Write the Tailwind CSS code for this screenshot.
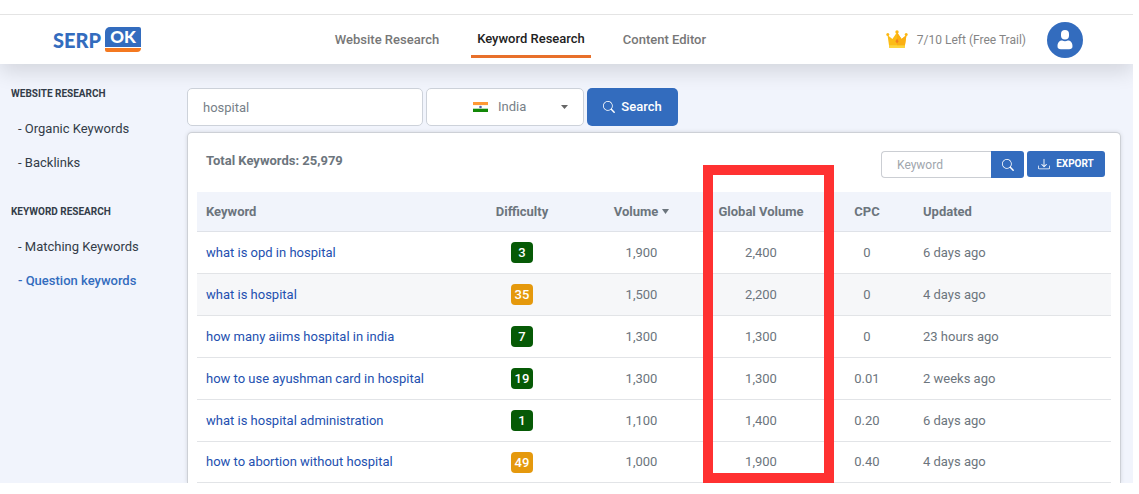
<!DOCTYPE html>
<html lang="en">
<head>
<meta charset="utf-8">
<meta name="viewport" content="width=device-width, initial-scale=1">
<title>SERP OK - Question keywords</title>
<script src="https://cdn.jsdelivr.net/npm/@tailwindcss/browser@4"></script>
</head>
<body class="flex min-h-screen flex-col bg-white pt-[14px] pr-[6px] pb-[11px] font-[Roboto,sans-serif] text-sm text-[#6c757d]">
  <div class="flex flex-1 flex-col overflow-hidden">
  <header class="relative z-10 flex h-[50px] items-center justify-between border-t border-[#e4e4e4] bg-white pr-[50px] pl-[53px] shadow-[0_8px_20px_rgba(0,0,0,0.12)]">
    <a href="#" class="flex items-center gap-1 font-[Lato,sans-serif] text-[20px] leading-6 font-black text-[#336cbe]">
      <span>SERP</span>
      <span class="flex flex-col gap-px">
        <span class="flex h-5 w-9 items-center justify-center rounded-tl-[5px] rounded-tr-[2px] bg-[#336cbe] text-[17px] leading-5 text-white">OK</span>
        <span class="h-1 w-9 rounded-br-[4px] rounded-bl-[2px] bg-[#f47920]"></span>
      </span>
    </a>
    <nav class="flex items-center gap-[26px] pl-[14px] text-[13px] leading-5 font-medium text-[#777]">
      <a href="#" class="px-1.5">Website Research</a>
      <a href="#" class="mt-2 border-b-[3px] border-[#e8702a] px-1.5 pb-1.5 text-[#222]" aria-current="page">Keyword Research</a>
      <a href="#" class="px-1.5">Content Editor</a>
    </nav>
    <div class="flex items-center gap-[21px]">
      <span class="flex items-center gap-[9px] text-xs text-[#858585]">
        <svg class="h-[19px] w-[22px]" viewBox="0 0 22 19" aria-hidden="true">
          <path d="M1.5 5 6.4 9 11 2.2 15.6 9 20.5 5 18.6 18H3.4Z" fill="#fcbc16"/>
          <path d="M3.1 15.2h15.8L18.5 18H3.5Z" fill="#fdd43c"/>
          <path d="M11 2.2 15.6 9 20.5 5 18.9 15.2H11Z" fill="#fbaf12"/>
          <circle cx="1.8" cy="4.4" r="1.5" fill="#fdb813"/><circle cx="11" cy="1.9" r="1.7" fill="#fdb813"/><circle cx="20.2" cy="4.4" r="1.5" fill="#fdb813"/>
          <path d="m11 8.8 1.6 2.4-1.6 2.4-1.6-2.4Z" fill="#f2801d"/>
        </svg>
        7/10 Left (Free Trail)
      </span>
      <button type="button" aria-label="Account" class="size-9">
        <svg class="size-9" viewBox="0 0 36 36" aria-hidden="true">
          <circle cx="18" cy="18" r="18" fill="#336cbe"/>
          <rect x="14" y="8" width="8" height="9.4" rx="4" fill="#fff"/>
          <path d="M10.5 24.2c0-3.6 2-5.6 4.8-5.6 1.6.8 3.8.8 5.4 0 2.8 0 4.8 2 4.8 5.6 0 2.2-1.4 3-3.4 3h-8.2c-2 0-3.4-.8-3.4-3Z" fill="#fff"/>
        </svg>
      </button>
    </div>
  </header>

  <div class="flex flex-1 bg-[#f1f4fc] pr-3">
    <aside class="w-[187px] shrink-0 pt-[22px] pl-[11px] text-[#333c48]">
      <h2 class="text-[10px] leading-4 font-bold text-[#333c48]">WEBSITE RESEARCH</h2>
      <ul class="mt-[10px] pl-[7px] text-[13px]">
        <li><a href="#" class="block leading-[34px]">- Organic Keywords</a></li>
        <li><a href="#" class="block leading-[34px]">- Backlinks</a></li>
      </ul>
      <h2 class="mt-6 text-[10px] leading-4 font-bold text-[#333c48]">KEYWORD RESEARCH</h2>
      <ul class="mt-[10px] pl-[7px] text-[13px]">
        <li><a href="#" class="block leading-[34px]">- Matching Keywords</a></li>
        <li><a href="#" class="block leading-[34px] font-medium text-[#336cbe]" aria-current="page">- Question keywords</a></li>
      </ul>
    </aside>

    <main class="flex min-w-0 flex-1 flex-col pt-6">
      <form class="flex gap-[3px]">
        <input type="text" aria-label="Search term" value="hospital" class="h-[38px] w-[236px] rounded-[5px] border border-[#cdd2da] bg-white px-[15px] text-[13px] text-[#777f88]">
        <span class="relative flex h-[38px] w-[158px] items-center rounded-[5px] border border-[#cdd2da] bg-white">
          <svg class="pointer-events-none absolute left-[46px] h-[10px] w-[15px]" viewBox="0 0 15 10" aria-hidden="true">
            <path d="M0 0h15v3.3H0Z" fill="#f93"/><path d="M0 3.3h15v3.4H0Z" fill="#fff"/><path d="M0 6.7h15V10H0Z" fill="#138808"/><circle cx="7.5" cy="5" r="1.3" fill="#5560a8"/>
          </svg>
          <select aria-label="Country" class="h-full w-full appearance-none bg-transparent pl-[71px] text-[13px] text-[#777f88]"><option>India</option></select>
          <svg class="pointer-events-none absolute right-[15px] h-1 w-[7px]" viewBox="0 0 7 4" aria-hidden="true"><path d="M0 0h7L3.5 4Z" fill="#666"/></svg>
        </span>
        <button type="submit" class="flex h-[38px] w-[91px] items-center justify-center gap-1.5 rounded-[5px] bg-[#336cbe] text-[13px] font-medium text-white">
          <svg class="size-3" viewBox="0 0 16 16" fill="currentColor" aria-hidden="true"><path d="M11.742 10.344a6.5 6.5 0 1 0-1.397 1.398l3.85 3.85a1 1 0 0 0 1.415-1.414l-3.868-3.834zM12 6.5a5.5 5.5 0 1 1-11 0 5.5 5.5 0 0 1 11 0z"/></svg>
          Search
        </button>
      </form>

      <section class="relative mt-1.5 flex-1 rounded-t-[5px] border border-b-0 border-[#cdd0d6] bg-white px-[9px] pt-[18px] shadow-[0_0_4px_rgba(0,0,0,0.12)]">
        <div class="flex items-start justify-between pr-[6px] pl-[9px]">
          <h1 class="text-[13px] leading-5 font-bold text-[#6c757d]">Total Keywords: 25,979</h1>
          <div class="flex gap-[3px]">
            <form class="flex">
              <input type="search" aria-label="Filter keywords" placeholder="Keyword" class="h-[27px] w-[110px] rounded-l-[4px] border border-r-0 border-[#cbced3] px-[15px] text-xs placeholder:text-[#a0a6ad]">
              <button type="submit" aria-label="Filter" class="flex h-[27px] w-[33px] items-center justify-center rounded-r-[3px] bg-[#336cbe] text-white">
                <svg class="size-3" viewBox="0 0 16 16" fill="currentColor" aria-hidden="true"><path d="M11.742 10.344a6.5 6.5 0 1 0-1.397 1.398l3.85 3.85a1 1 0 0 0 1.415-1.414l-3.868-3.834zM12 6.5a5.5 5.5 0 1 1-11 0 5.5 5.5 0 0 1 11 0z"/></svg>
              </button>
            </form>
            <button type="button" class="flex h-[26px] w-[78px] items-center justify-center gap-1.5 rounded-[3px] bg-[#336cbe] text-[10px] font-bold text-white">
              <svg class="size-3" viewBox="0 0 16 16" fill="currentColor" aria-hidden="true"><path d="M.5 9.9a.5.5 0 0 1 .5.5v2.5a1 1 0 0 0 1 1h12a1 1 0 0 0 1-1v-2.5a.5.5 0 0 1 1 0v2.5a2 2 0 0 1-2 2H2a2 2 0 0 1-2-2v-2.5a.5.5 0 0 1 .5-.5z"/><path d="M7.4 11.854a.7.7 0 0 0 1.2 0l3-3a.5.5 0 0 0-.708-.708L8.6 10.293V1.5a.6.6 0 0 0-1.2 0v8.793L5.354 8.146a.5.5 0 1 0-.708.708l3 3z"/></svg>
              EXPORT
            </button>
          </div>
        </div>

        <table class="mt-[14px] w-full table-fixed border-separate border-spacing-0 text-[13px] leading-5">
          <colgroup><col><col class="w-[120px]"><col class="w-[119px]"><col class="w-[120px]"><col class="w-[92px]"><col class="w-[198px]"></colgroup>
          <thead>
            <tr class="h-10 bg-[#f1f4fb] *:border-b *:border-[#dfe2e8] *:font-bold">
              <th scope="col" class="pl-[9px] text-left">Keyword</th>
              <th scope="col">Difficulty</th>
              <th scope="col"><button type="button" class="inline-flex items-center gap-1">Volume <svg class="h-[5px] w-[7px]" viewBox="0 0 7 5" aria-hidden="true"><path d="M0 0h7L3.5 5Z" fill="#6c757d"/></svg></button></th>
              <th scope="col">Global Volume</th>
              <th scope="col">CPC</th>
              <th scope="col" class="pl-[10px] text-left">Updated</th>
            </tr>
          </thead>
          <tbody class="text-center">
            <tr class="h-[42px] *:border-b *:border-[#e2e4e7]">
              <td class="pl-[9px] text-left"><a href="#" class="text-[#2350b0]">what is opd in hospital</a></td>
              <td><span class="inline-block h-[21px] w-[22px] rounded-[4px] bg-[#065a06] leading-[21px] font-medium text-white">3</span></td>
              <td>1,900</td><td>2,400</td><td>0</td><td class="pl-[10px] text-left">6 days ago</td>
            </tr>
            <tr class="h-[42px] bg-[#f6f7f9] *:border-b *:border-[#e2e4e7]">
              <td class="pl-[9px] text-left"><a href="#" class="text-[#2350b0]">what is hospital</a></td>
              <td><span class="inline-block h-[21px] w-[22px] rounded-[4px] bg-[#e5990d] leading-[21px] font-medium text-white">35</span></td>
              <td>1,500</td><td>2,200</td><td>0</td><td class="pl-[10px] text-left">4 days ago</td>
            </tr>
            <tr class="h-[42px] *:border-b *:border-[#e2e4e7]">
              <td class="pl-[9px] text-left"><a href="#" class="text-[#2350b0]">how many aiims hospital in india</a></td>
              <td><span class="inline-block h-[21px] w-[22px] rounded-[4px] bg-[#065a06] leading-[21px] font-medium text-white">7</span></td>
              <td>1,300</td><td>1,300</td><td>0</td><td class="pl-[10px] text-left">23 hours ago</td>
            </tr>
            <tr class="h-[42px] *:border-b *:border-[#e2e4e7]">
              <td class="pl-[9px] text-left"><a href="#" class="text-[#2350b0]">how to use ayushman card in hospital</a></td>
              <td><span class="inline-block h-[21px] w-[22px] rounded-[4px] bg-[#065a06] leading-[21px] font-medium text-white">19</span></td>
              <td>1,300</td><td>1,300</td><td>0.01</td><td class="pl-[10px] text-left">2 weeks ago</td>
            </tr>
            <tr class="h-[42px] *:border-b *:border-[#e2e4e7]">
              <td class="pl-[9px] text-left"><a href="#" class="text-[#2350b0]">what is hospital administration</a></td>
              <td><span class="inline-block h-[21px] w-[22px] rounded-[4px] bg-[#065a06] leading-[21px] font-medium text-white">1</span></td>
              <td>1,100</td><td>1,400</td><td>0.20</td><td class="pl-[10px] text-left">6 days ago</td>
            </tr>
            <tr class="h-[41px] *:border-b *:border-[#e2e4e7]">
              <td class="pl-[9px] text-left"><a href="#" class="text-[#2350b0]">how to abortion without hospital</a></td>
              <td><span class="inline-block h-[21px] w-[22px] rounded-[4px] bg-[#e5990d] leading-[21px] font-medium text-white">49</span></td>
              <td>1,000</td><td>1,900</td><td>0.40</td><td class="pl-[10px] text-left">4 days ago</td>
            </tr>
          </tbody>
        </table>

        <!-- Highlight frame around the Global Volume column -->
        <div class="pointer-events-none absolute top-8 right-[286px] bottom-0 w-[131px] border-[10px] border-[#ff3131]"></div>
      </section>
    </main>
  </div>
  </div>
</body>
</html>
